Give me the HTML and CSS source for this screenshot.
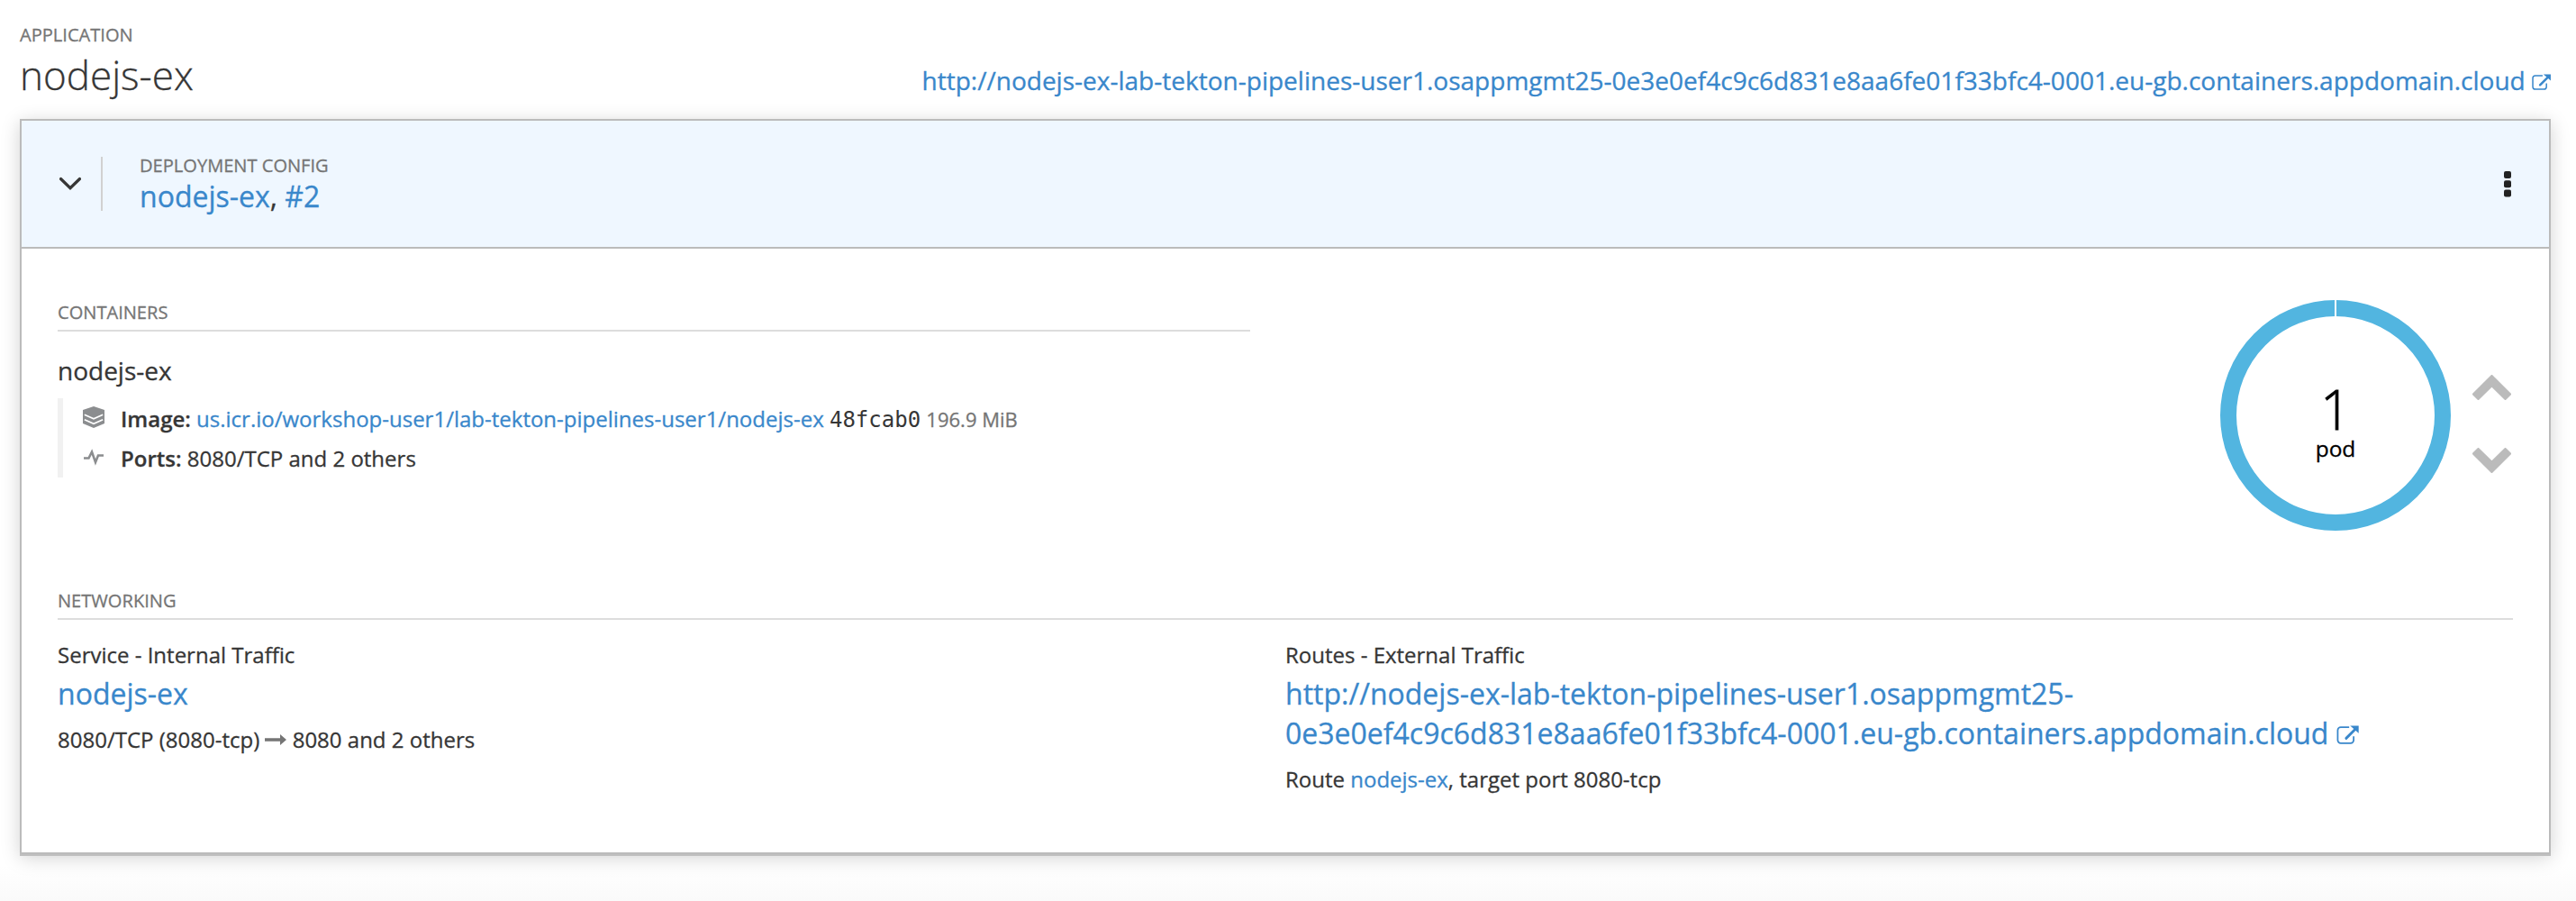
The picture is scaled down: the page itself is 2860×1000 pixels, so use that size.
FILE: index.html
```html
<!DOCTYPE html>
<html lang="en">
<head>
<meta charset="utf-8">
<title>nodejs-ex</title>
<link rel="stylesheet" href="styles.css">
</head>
<body>
<svg class="sprite" aria-hidden="true">
  <symbol id="external" viewBox="0 0 22 19">
    <path d="M12.500 2H4a3 3 0 0 0-3 3v10a3 3 0 0 0 3 3h10a3 3 0 0 0 3-3v-4" fill="none" stroke="currentColor" stroke-width="1.600"/>
    <path d="M9.500 13 18 4.500" fill="none" stroke="currentColor" stroke-width="2.600" stroke-linecap="round"/>
    <path d="M13.500 .5H22V8z" fill="currentColor"/>
  </symbol>
</svg>
<main class="page">
  <header class="app-header">
    <div>
      <div class="label">APPLICATION</div>
      <h1 class="app-name">nodejs-ex</h1>
    </div>
    <a class="app-url" href="#">http://nodejs-ex-lab-tekton-pipelines-user1.osappmgmt25-0e3e0ef4c9c6d831e8aa6fe01f33bfc4-0001.eu-gb.containers.appdomain.cloud <svg class="external"><use href="#external"/></svg></a>
  </header>

  <section class="card">
    <div class="card-header">
      <svg class="chevron" viewBox="0 0 24 16"><path d="M1.500 2.500 12 12.700 22.500 2.500" fill="none" stroke="currentColor" stroke-width="3.200" stroke-linecap="round"/></svg>
      <div class="card-title">
        <div class="label">DEPLOYMENT CONFIG</div>
        <h2 class="name"><a href="#">nodejs-ex</a>, <a href="#">#2</a></h2>
      </div>
      <svg class="kebab" viewBox="0 0 8 29"><rect width="8" height="8" rx="2"/><rect y="10.300" width="8" height="8" rx="2"/><rect y="20.600" width="8" height="8" rx="2"/></svg>
    </div>

    <div class="card-body">
      <div class="overview">
        <div class="containers">
          <h3 class="label section-label">CONTAINERS</h3>
          <h4 class="container-name">nodejs-ex</h4>
          <ul class="details">
            <li>
              <svg class="detail-icon" viewBox="0 0 24 24"><path d="M12 0 24 4V19L12 24 0 19V4z" fill="currentColor"/><path d="M1.800 9.300 12 13.800 22.200 9.300M1.800 14.700 12 19.200 22.200 14.700" fill="none" stroke="#fff" stroke-width="1.700"/></svg>
              <span><strong>Image:</strong> <a href="#">us.icr.io/workshop-user1/lab-tekton-pipelines-user1/nodejs-ex</a> <code class="hash">48fcab0</code> <small class="size">196.9 MiB</small></span>
            </li>
            <li>
              <svg class="detail-icon" viewBox="0 0 24 24"><path d="M1 13.500H6.500L10 6.500 14 18 17 10.500H23" fill="none" stroke="currentColor" stroke-width="2.600"/></svg>
              <span><strong>Ports:</strong> 8080/TCP and 2 others</span>
            </li>
          </ul>
        </div>
        <div class="scaling">
          <svg class="donut" viewBox="0 0 256 256">
            <circle cx="128" cy="128" r="119" fill="none" stroke="#52b5e0" stroke-width="18"/>
            <path d="M128 0v19" stroke="#fff" stroke-width="2"/>
            <text class="pod-count" x="128" y="144">1</text>
            <text class="pod-label" x="128" y="174">pod</text>
          </svg>
          <div class="arrows">
            <svg viewBox="0 0 43 28"><path d="M21.500 1.400 41.600 21.500 36.500 26.600 21.500 11.800 6.500 26.600 1.400 21.500z"/></svg>
            <svg viewBox="0 0 43 28"><path d="M21.500 26.600 41.600 6.500 36.500 1.400 21.500 16.200 6.500 1.400 1.400 6.500z"/></svg>
          </div>
        </div>
      </div>

      <h3 class="label section-label">NETWORKING</h3>
      <div class="networking">
        <div>
          <p class="text">Service - Internal Traffic</p>
          <p class="name target"><a href="#">nodejs-ex</a></p>
          <p class="text">8080/TCP (8080-tcp) <svg class="arrow" viewBox="0 0 24 12"><path d="M0 4.200H17V0L24 6 17 12V7.800H0z"/></svg> 8080 and 2 others</p>
        </div>
        <div>
          <p class="text">Routes - External Traffic</p>
          <p class="name target"><a href="#">http://nodejs-ex-lab-tekton-pipelines-user1.osappmgmt25-<wbr>0e3e0ef4c9c6d831e8aa6fe01f33bfc4-0001.eu-gb.containers.appdomain.cloud <svg class="external large"><use href="#external"/></svg></a></p>
          <p class="text">Route <a href="#">nodejs-ex</a>, target port 8080-tcp</p>
        </div>
      </div>
    </div>
  </section>
</main>
</body>
</html>
```
FILE: styles.css
```css
* { box-sizing: border-box; }

body {
  margin: 0;
  background: #fff;
  color: #363636;
  font: 24px/32px "Open Sans", sans-serif;
  -webkit-text-stroke: .3px currentColor;
}

h1, h2, h3, h4, p, ul { margin: 0; padding: 0; font-weight: 400; }
a { color: #3987cb; text-decoration: none; -webkit-text-stroke-color: currentColor; }
strong { font-weight: 600; }
svg { flex: none; }

.sprite { display: none; }

.page {
  min-height: 1000px;
  padding: 26px 28px 50px 22px;
  background: linear-gradient(#fff 960px, #fafafa 1000px);
}

.label { color: #757575; font-size: 20.08px; line-height: 25px; }

.app-header {
  display: flex;
  justify-content: space-between;
  align-items: flex-end;
  height: 87px;
  margin-bottom: 19px;
}
.app-name { margin-top: 2px; font-size: 44px; font-weight: 300; line-height: 60px; }
.app-url { padding-bottom: 8px; font-size: 28.02px; line-height: 32px; white-space: nowrap; }

.external { width: 21px; height: 18px; }
.external.large { width: 25px; height: 21px; }

.card {
  height: 816px;
  border: 2px solid #bbb;
  background: #fff;
  box-shadow: 0 2px 0 #bfbfbf, 0 4px 20px rgba(0, 0, 0, .18);
}
.card-header {
  display: flex;
  align-items: center;
  height: 142px;
  padding: 0 42px;
  border-bottom: 2px solid #bbb;
  background: #eff7ff;
}
.chevron { width: 24px; height: 16px; margin-right: 22px; }
.card-title { position: relative; padding: 3px 0 0 43px; }
.card-title::before {
  content: "";
  position: absolute;
  top: 6px;
  left: 0;
  width: 2px;
  height: 60px;
  background: #d1d1d1;
}
.name { font-size: 32px; line-height: 44px; }
.kebab { width: 8px; height: 29px; margin-left: auto; fill: #222; }

.card-body { padding: 58px 40px 0; }
.overview { display: flex; justify-content: space-between; height: 320px; }
.containers { width: 1324px; }
.section-label { padding-bottom: 7px; border-bottom: 2px solid #ddd; }
.container-name { margin: 27px 0 15px; font-size: 28px; line-height: 32px; }

.details { border-left: 6px solid #f1f1f1; padding-left: 22px; list-style: none; }
.details li { display: flex; align-items: center; gap: 18px; height: 44px; white-space: nowrap; }
.details span { padding-top: 1px; }
.detail-icon { width: 24px; height: 24px; color: #8b8d8f; margin-bottom: 2px; }
.hash { font: 24px/1 "DejaVu Sans Mono", monospace; -webkit-text-stroke: 0; }
.size { color: #757575; font-size: 22px; line-height: 1; }

.scaling { display: flex; gap: 24px; padding-right: 2px; }
.donut { width: 256px; height: 256px; margin-top: -1px; }
.donut text { fill: #000; text-anchor: middle; stroke: #000; stroke-width: .3px; }
.donut .pod-count { font-size: 60px; font-weight: 300; stroke-width: .8px; }
.pod-label { font-size: 24.5px; }
.arrows { display: flex; flex-direction: column; gap: 53px; padding-top: 82px; }
.arrows svg { width: 43px; height: 28px; }
.arrows path { fill: #bbb; stroke: #bbb; stroke-width: 2.8; stroke-linejoin: round; }

.networking {
  display: grid;
  grid-template-columns: 1363px 1fr;
  padding-top: 23px;
}
.target { margin: 5px 0 13px; }
.arrow { width: 24px; height: 12px; margin-bottom: 3px; fill: #757575; }
```
